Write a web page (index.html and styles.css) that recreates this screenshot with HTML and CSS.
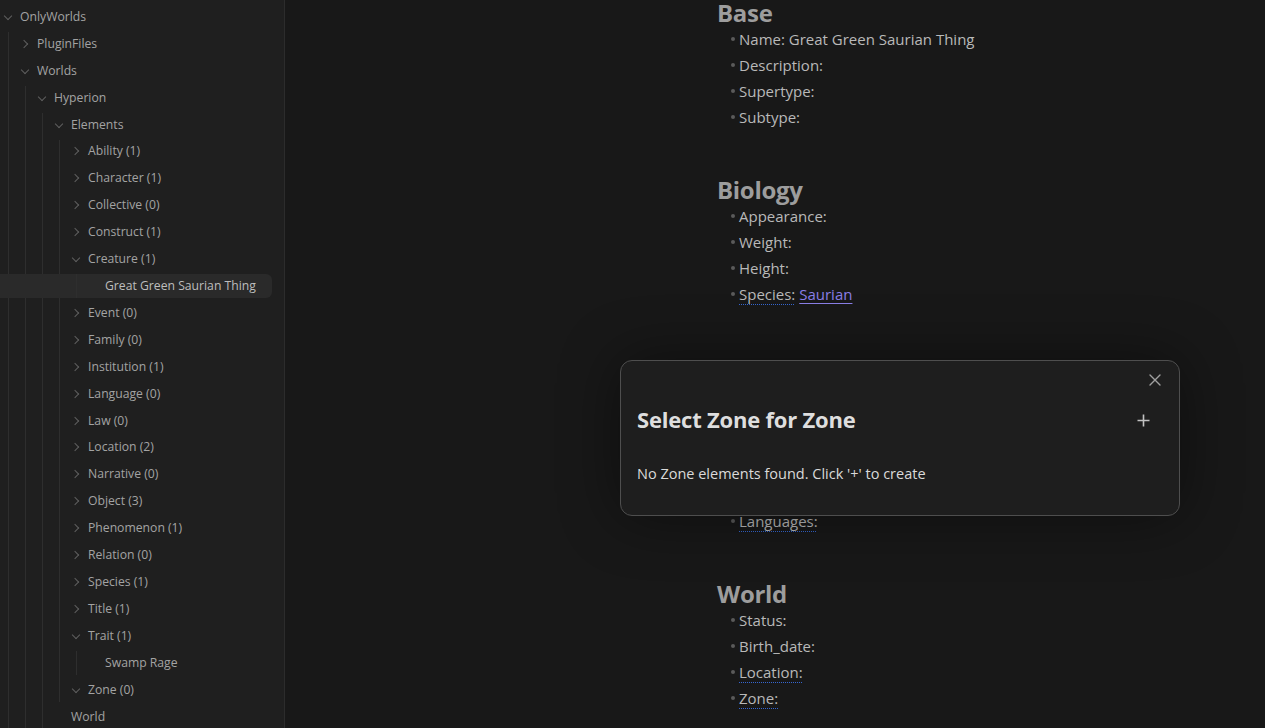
FILE: index.html
```html
<!DOCTYPE html>
<html>
<head>
<meta charset="utf-8">
<link rel="stylesheet" href="styles.css">
</head>
<body>
<div class="app">
  <aside class="sidebar">
    <div class="item">
      <div class="row l0"><span class="chev down"></span><span class="label">OnlyWorlds</span></div>
      <div class="children g0">
        <div class="row l1"><span class="chev right"></span><span class="label">PluginFiles</span></div>
        <div class="item">
          <div class="row l1"><span class="chev down"></span><span class="label">Worlds</span></div>
          <div class="children g1">
            <div class="item">
              <div class="row l2"><span class="chev down"></span><span class="label">Hyperion</span></div>
              <div class="children g2">
                <div class="item">
                  <div class="row l3"><span class="chev down"></span><span class="label">Elements</span></div>
                  <div class="children g3">
                    <div class="row l4"><span class="chev right"></span><span class="label">Ability (1)</span></div>
                    <div class="row l4"><span class="chev right"></span><span class="label">Character (1)</span></div>
                    <div class="row l4"><span class="chev right"></span><span class="label">Collective (0)</span></div>
                    <div class="row l4"><span class="chev right"></span><span class="label">Construct (1)</span></div>
                    <div class="item">
                      <div class="row l4"><span class="chev down"></span><span class="label">Creature (1)</span></div>
                      <div class="children g4">
                        <div class="row l5 active"><span class="chev"></span><span class="label">Great Green Saurian Thing</span></div>
                      </div>
                    </div>
                    <div class="row l4"><span class="chev right"></span><span class="label">Event (0)</span></div>
                    <div class="row l4"><span class="chev right"></span><span class="label">Family (0)</span></div>
                    <div class="row l4"><span class="chev right"></span><span class="label">Institution (1)</span></div>
                    <div class="row l4"><span class="chev right"></span><span class="label">Language (0)</span></div>
                    <div class="row l4"><span class="chev right"></span><span class="label">Law (0)</span></div>
                    <div class="row l4"><span class="chev right"></span><span class="label">Location (2)</span></div>
                    <div class="row l4"><span class="chev right"></span><span class="label">Narrative (0)</span></div>
                    <div class="row l4"><span class="chev right"></span><span class="label">Object (3)</span></div>
                    <div class="row l4"><span class="chev right"></span><span class="label">Phenomenon (1)</span></div>
                    <div class="row l4"><span class="chev right"></span><span class="label">Relation (0)</span></div>
                    <div class="row l4"><span class="chev right"></span><span class="label">Species (1)</span></div>
                    <div class="row l4"><span class="chev right"></span><span class="label">Title (1)</span></div>
                    <div class="item">
                      <div class="row l4"><span class="chev down"></span><span class="label">Trait (1)</span></div>
                      <div class="children g4">
                        <div class="row l5"><span class="chev"></span><span class="label">Swamp Rage</span></div>
                      </div>
                    </div>
                    <div class="row l4"><span class="chev down"></span><span class="label">Zone (0)</span></div>
                  </div>
                </div>
                <div class="row l3"><span class="chev"></span><span class="label">World</span></div>
              </div>
            </div>
          </div>
        </div>
      </div>
    </div>
  </aside>

  <main class="main">
    <div class="doc">
      <h2 class="first">Base</h2>
      <ul>
        <li>Name: Great Green Saurian Thing</li>
        <li>Description:</li>
        <li>Supertype:</li>
        <li>Subtype:</li>
      </ul>
      <h2>Biology</h2>
      <ul>
        <li>Appearance:</li>
        <li>Weight:</li>
        <li>Height:</li>
        <li><span class="ilink">Species:</span> <a class="link">Saurian</a></li>
      </ul>
      <ul class="covered">
        <li><span class="ilink">Languages:</span></li>
      </ul>
      <h2>World</h2>
      <ul>
        <li>Status:</li>
        <li>Birth_date:</li>
        <li><span class="ilink">Location:</span></li>
        <li><span class="ilink">Zone:</span></li>
      </ul>
    </div>

    <div class="modal">
      <button class="close" aria-label="Close">
        <svg width="12" height="12" viewBox="0 0 12 12"><path d="M1 1 L11 11 M11 1 L1 11" stroke="currentColor" stroke-width="1.4" fill="none" stroke-linecap="round"/></svg>
      </button>
      <div class="modal-head">
        <h3>Select Zone for Zone</h3>
        <button class="add" aria-label="Create">
          <svg width="13" height="13" viewBox="0 0 13 13"><path d="M6.5 0.5 V12.5 M0.5 6.5 H12.5" stroke="currentColor" stroke-width="1.6" fill="none"/></svg>
        </button>
      </div>
      <p class="empty">No Zone elements found. Click '+' to create</p>
    </div>
  </main>
</div>
</body>
</html>
```

FILE: styles.css
```css
* { box-sizing: border-box; }
html, body { margin: 0; padding: 0; height: 100%; }
body {
  background: #181818;
  font-family: "Open Sans", "Noto Sans", sans-serif;
  overflow: hidden;
}
.app { display: flex; height: 728px; }

.sidebar {
  width: 285px;
  flex: none;
  background: #1f1f1f;
  border-right: 1px solid #2c2c2c;
  padding-top: 5px;
  overflow: hidden;
}
.children { position: relative; }
.children::before {
  content: "";
  position: absolute;
  top: 0; bottom: 0;
  width: 1px;
  background: #2e2e2e;
}
.g0::before { left: 8px; }
.g1::before { left: 25px; }
.g2::before { left: 42px; }
.g3::before { left: 59px; }
.g4::before { left: 76px; }

.row {
  display: flex;
  align-items: center;
  height: 23.92px;
  margin-bottom: 3px;
  width: 272px;
  border-radius: 0 6px 6px 0;
  color: #a3a3a3;
  font-size: 12.2px;
  white-space: nowrap;
}
.row.active { background: #2a2a2a; color: #bdbdbd; }
.l0 { padding-left: 0; }
.l1 { padding-left: 17px; }
.l2 { padding-left: 34px; }
.l3 { padding-left: 51px; }
.l4 { padding-left: 68px; }
.l5 { padding-left: 85px; }
.chev {
  width: 16px;
  height: 16px;
  flex: none;
  margin-right: 4px;
  position: relative;
}
.chev.right::after, .chev.down::after {
  content: "";
  position: absolute;
  width: 5px; height: 5px;
  border-right: 1.3px solid #5f5f5f;
  border-bottom: 1.3px solid #5f5f5f;
}
.chev.right::after { left: 4px; top: 5px; transform: rotate(-45deg); }
.chev.down::after { left: 5px; top: 4px; transform: rotate(45deg); }
.label { line-height: 24px; }

.main { flex: 1; position: relative; }
.doc { padding-left: 432px; }
.doc h2 {
  margin: 47px 0 0;
  font-size: 24px;
  line-height: 26px;
  font-weight: 700;
  color: #9d9d9d;
  letter-spacing: -0.3px;
}
.doc h2.first { margin-top: 0; }
.doc ul { list-style: none; margin: 0; padding: 0 0 0 22px; }
.doc ul.covered { margin-top: 201px; }
.doc li {
  position: relative;
  font-size: 15px;
  line-height: 26px;
  color: #b9b9b9;
}
.doc li::before {
  content: "";
  position: absolute;
  left: -8px; top: 11px;
  width: 4px; height: 4px;
  border-radius: 50%;
  background: #5a5a5a;
}
.ilink {
  text-decoration: underline dotted #3566d0;
  text-underline-offset: 4px;
  text-decoration-thickness: 1px;
}
.link {
  color: #8a7ee6;
  text-decoration: underline;
  text-underline-offset: 3px;
}

.modal {
  position: absolute;
  left: 335px;
  top: 360px;
  width: 560px;
  height: 156px;
  background: #1e1e1e;
  border: 1px solid #4e4e4e;
  border-radius: 12px;
  box-shadow: 0 0 60px rgba(0,0,0,0.45);
  padding: 0 16px;
  color: #dcdcdc;
}
.close {
  position: absolute;
  right: 18px; top: 13px;
  background: none; border: 0; padding: 0;
  color: #a0a0a0;
  width: 12px; height: 12px;
  display: block;
}
.close svg, .add svg { display: block; }
.modal-head {
  display: flex;
  align-items: center;
  justify-content: space-between;
  margin-top: 43px;
  height: 30px;
}
.modal-head h3 {
  margin: 0;
  font-size: 22px;
  font-weight: 700;
  color: #dedede;
  letter-spacing: -0.2px;
}
.add {
  background: none; border: 0; padding: 0;
  color: #c2c2c2;
  margin-right: 13px;
  margin-top: 2px;
}
.empty {
  margin: 30px 0 0;
  font-size: 14.5px;
  line-height: 20px;
  color: #dadada;
}
```
